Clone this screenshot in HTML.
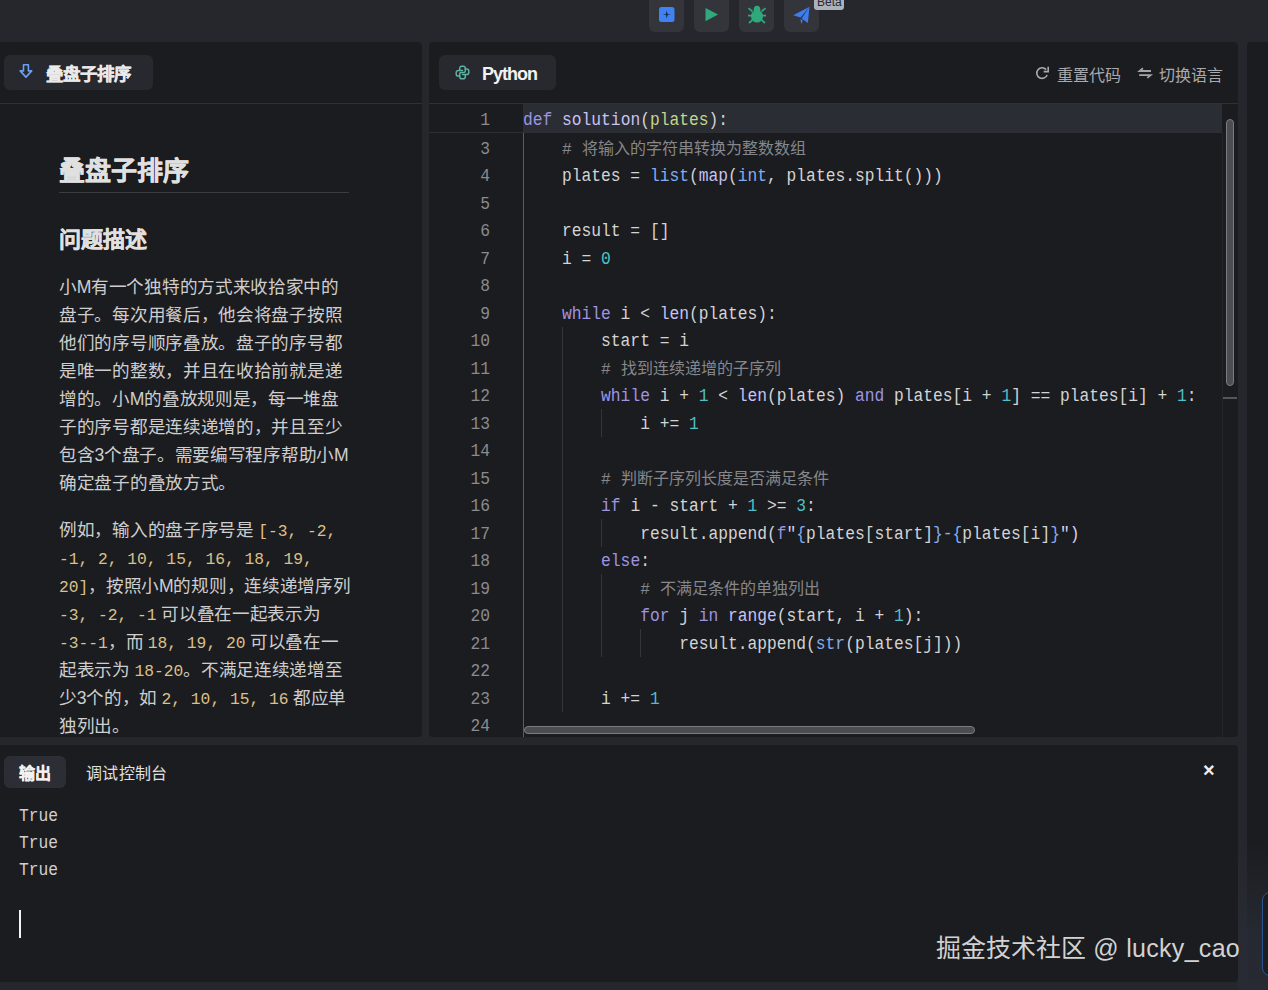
<!DOCTYPE html>
<html lang="zh-CN">
<head>
<meta charset="utf-8">
<style>
*{margin:0;padding:0;box-sizing:border-box}
html,body{width:1268px;height:990px;overflow:hidden;background:#26272c;font-family:"Liberation Sans",sans-serif;color:#d4d4d4}
.abs{position:absolute}
.panel{position:absolute;background:#1b1c20;border-radius:4px}
.btn{position:absolute;top:-6px;width:35px;height:38px;background:#34353b;border-radius:6px}
.tab{position:absolute;background:#27292f;border-radius:6px}
.sep{position:absolute;height:1px;background:#2f3137}
.mono{font-family:"Liberation Mono",monospace}
#left p{position:absolute;left:59px;width:300px;letter-spacing:-0.3px;font-size:17.6px;font-weight:300;line-height:28px;color:#cecece;white-space:nowrap}
.ic{color:#dcc088;font-family:"Liberation Mono",monospace;font-size:16.28px;letter-spacing:0}
.ln{transform:scaleY(1.13);position:absolute;left:429px;width:61px;text-align:right;font-family:"Liberation Mono",monospace;font-size:16.28px;color:#8a8b8f;height:27.5px;line-height:27.5px}
.cl{position:absolute;left:523px;font-family:"Liberation Mono",monospace;font-size:16.28px;color:#d4d4d4;height:27.5px;line-height:27.5px;white-space:pre}
.k{color:#9f94e0}
.n{color:#4fc1c9}
.b{color:#84adef}
.f{color:#c9c2f2}
.c{color:#86878b}
.cj{font-family:"Liberation Sans",sans-serif;font-size:16px;font-weight:300}
.p{color:#c5d68a}
.s{color:#d8d3e8}
.s2{color:#a9a3c9}
.sy{transform:scaleY(1.12)}
.guide{position:absolute;width:1px;background:#34353a}
</style>
</head>
<body>
<!-- toolbar -->
<div class="btn" style="left:649px"></div>
<div class="btn" style="left:694px"></div>
<div class="btn" style="left:739px"></div>
<div class="btn" style="left:784px"></div>
<svg class="abs" style="left:0;top:0" width="1268" height="40" viewBox="0 0 1268 40">
  <rect x="659" y="7" width="15.5" height="15" rx="2.5" fill="#3f82f4"/>
  <path d="M666.75 10.5 L667.6 13.9 L670.75 14.5 L667.6 15.1 L666.75 18.5 L665.9 15.1 L662.75 14.5 L665.9 13.9 Z" fill="#1d2a44"/>
  <path d="M705.5 8 L718 14.6 L705.5 21.3 Z" fill="#2fa97b"/>
  <g fill="#2fa97b" stroke="#2fa97b">
    <ellipse cx="757" cy="16.2" rx="6" ry="6.3" stroke="none"/><ellipse cx="757" cy="9.6" rx="3.3" ry="3.8" stroke="none"/>
    <path d="M748.5 8.2 L752.5 11.5 M765.5 8.2 L761.5 11.5 M748 15.6 L752 15.6 M766 15.6 L762 15.6 M749 23 L752.5 20 M765 23 L761.5 20" stroke-width="1.7" fill="none"/>
  </g>
  <path d="M809.5 6.8 L793.2 15.2 L800.6 17.6 Z M809.5 6.8 L801.6 18.4 L807.9 23.1 Z M800.3 18.9 L802.8 20.6 L801.3 23.9 Z" fill="#3e7cf0"/>
  <rect x="814" y="-5" width="30" height="15" rx="3" fill="#adb1b9"/>
  <text x="817" y="5.5" font-family="Liberation Sans" font-size="12" fill="#232833">Beta</text>
</svg>

<!-- left panel -->
<div class="panel" id="left" style="left:-6px;top:42px;width:428px;height:695px">
</div>
<div class="sep" style="left:0;top:103px;width:422px"></div>
<div class="tab" style="left:4px;top:55px;width:149px;height:35px"></div>
<div class="abs" style="left:46px;top:62px;font-size:17.5px;font-weight:bold;color:#eaeaea;-webkit-text-stroke:0.3px #eaeaea;line-height:24px">叠盘子排序</div>

<div class="abs" style="left:59px;top:153px;font-size:26px;font-weight:bold;color:#e0e0e0;-webkit-text-stroke:0.35px #e0e0e0;line-height:36px">叠盘子排序</div>
<div class="sep" style="left:59px;top:192px;width:290px;background:#3a3c42"></div>
<div class="abs" style="left:59px;top:225px;font-size:22px;font-weight:bold;color:#e0e0e0;-webkit-text-stroke:0.35px #e0e0e0;line-height:30px">问题描述</div>

<div id="left">
<p style="top:272.5px">小M有一个独特的方式来收拾家中的</p>
<p style="top:300.5px">盘子。每次用餐后，他会将盘子按照</p>
<p style="top:328.5px">他们的序号顺序叠放。盘子的序号都</p>
<p style="top:356.5px">是唯一的整数，并且在收拾前就是递</p>
<p style="top:384.5px">增的。小M的叠放规则是，每一堆盘</p>
<p style="top:412.5px">子的序号都是连续递增的，并且至少</p>
<p style="top:440.5px">包含3个盘子。需要编写程序帮助小M</p>
<p style="top:468.5px">确定盘子的叠放方式。</p>

<p style="top:515.5px">例如，输入的盘子序号是 <span class="ic">[-3, -2,</span></p>
<p style="top:543.5px"><span class="ic">-1, 2, 10, 15, 16, 18, 19,</span></p>
<p style="top:571.5px"><span class="ic">20]</span>，按照小M的规则，连续递增序列</p>
<p style="top:599.5px"><span class="ic">-3, -2, -1</span> 可以叠在一起表示为</p>
<p style="top:627.5px"><span class="ic">-3--1</span>，而 <span class="ic">18, 19, 20</span> 可以叠在一</p>
<p style="top:655.5px">起表示为 <span class="ic">18-20</span>。不满足连续递增至</p>
<p style="top:683.5px">少3个的，如 <span class="ic">2, 10, 15, 16</span> 都应单</p>
<p style="top:711.5px">独列出。</p>
</div>

<!-- right panel -->
<div class="panel" style="left:429px;top:42px;width:809px;height:695px"></div>
<div class="panel" style="left:1247px;top:42px;width:40px;height:940px"></div>
<div class="sep" style="left:429px;top:103px;width:809px"></div>
<div class="tab" style="left:439px;top:55px;width:117px;height:35px"></div>
<div class="abs" style="left:482px;top:61.5px;font-size:18px;letter-spacing:-1px;font-weight:bold;color:#f2f2f2;line-height:24px">Python</div>
<div class="abs" style="left:1057px;top:64.5px;font-size:16px;color:#a9aaae;line-height:22px">重置代码</div>
<div class="abs" style="left:1159px;top:64.5px;font-size:16px;color:#a9aaae;line-height:22px">切换语言</div>

<!-- code -->
<div class="guide" style="left:523px;top:132px;height:605px;background:#5c5d62"></div>
<div class="guide" style="left:562px;top:326.5px;height:385.0px"></div>
<div class="guide" style="left:601px;top:409.0px;height:27.5px"></div>
<div class="guide" style="left:601px;top:519.0px;height:27.5px"></div>
<div class="guide" style="left:601px;top:574.0px;height:82.5px"></div>
<div class="guide" style="left:640px;top:629.0px;height:27.5px"></div>
<div class="ln" style="top:134.75px">3</div>
<div class="cl" style="top:134.75px">    <span class="c"># <span class="cj">将输入的字符串转换为整数数组</span></span></div>
<div class="ln" style="top:162.25px">4</div>
<div class="cl sy" style="top:162.25px">    plates = <span class="b">list</span>(<span class="f">map</span>(<span class="b">int</span>, plates.split()))</div>
<div class="ln" style="top:189.75px">5</div>
<div class="ln" style="top:217.25px">6</div>
<div class="cl sy" style="top:217.25px">    result = []</div>
<div class="ln" style="top:244.75px">7</div>
<div class="cl sy" style="top:244.75px">    i = <span class="n">0</span></div>
<div class="ln" style="top:272.25px">8</div>
<div class="ln" style="top:299.75px">9</div>
<div class="cl sy" style="top:299.75px">    <span class="k">while</span> i &lt; <span class="f">len</span>(plates):</div>
<div class="ln" style="top:327.25px">10</div>
<div class="cl sy" style="top:327.25px">        start = i</div>
<div class="ln" style="top:354.75px">11</div>
<div class="cl" style="top:354.75px">        <span class="c"># <span class="cj">找到连续递增的子序列</span></span></div>
<div class="ln" style="top:382.25px">12</div>
<div class="cl sy" style="top:382.25px">        <span class="k">while</span> i + <span class="n">1</span> &lt; <span class="f">len</span>(plates) <span class="k">and</span> plates[i + <span class="n">1</span>] == plates[i] + <span class="n">1</span>:</div>
<div class="ln" style="top:409.75px">13</div>
<div class="cl sy" style="top:409.75px">            i += <span class="n">1</span></div>
<div class="ln" style="top:437.25px">14</div>
<div class="ln" style="top:464.75px">15</div>
<div class="cl" style="top:464.75px">        <span class="c"># <span class="cj">判断子序列长度是否满足条件</span></span></div>
<div class="ln" style="top:492.25px">16</div>
<div class="cl sy" style="top:492.25px">        <span class="k">if</span> i - start + <span class="n">1</span> &gt;= <span class="n">3</span>:</div>
<div class="ln" style="top:519.75px">17</div>
<div class="cl sy" style="top:519.75px">            result.append(<span class="k">f</span><span class="s">"</span><span class="b">{</span>plates[start]<span class="b">}</span><span class="s2">-</span><span class="b">{</span>plates[i]<span class="b">}</span><span class="s">")</span></div>
<div class="ln" style="top:547.25px">18</div>
<div class="cl sy" style="top:547.25px">        <span class="k">else</span>:</div>
<div class="ln" style="top:574.75px">19</div>
<div class="cl" style="top:574.75px">            <span class="c"># <span class="cj">不满足条件的单独列出</span></span></div>
<div class="ln" style="top:602.25px">20</div>
<div class="cl sy" style="top:602.25px">            <span class="k">for</span> j <span class="k">in</span> <span class="f">range</span>(start, i + <span class="n">1</span>):</div>
<div class="ln" style="top:629.75px">21</div>
<div class="cl sy" style="top:629.75px">                result.append(<span class="b">str</span>(plates[j]))</div>
<div class="ln" style="top:657.25px">22</div>
<div class="ln" style="top:684.75px">23</div>
<div class="cl sy" style="top:684.75px">        i += <span class="n">1</span></div>
<div class="ln" style="top:712.25px">24</div>
<div class="abs" style="left:429px;top:103.5px;width:793px;height:28.5px;background:#2a2d33"></div>
<div class="abs" style="left:429px;top:103.5px;width:94px;height:28.5px;background:#1b1c20"></div>
<div class="ln" style="top:106px">1</div>
<div class="cl sy" style="top:106px"><span class="k">def</span> <span class="f">solution</span>(<span class="p">plates</span>):</div>
<div class="abs" style="left:429px;top:131.5px;width:793px;height:1px;background:#2c2e33"></div>
<div class="abs" style="left:1226px;top:119px;width:8px;height:267px;border-radius:4px;background:#4c4d52;border:1px solid #7a7b80"></div>
<div class="abs" style="left:1223px;top:397px;width:14px;height:2px;background:#55565b"></div>
<div class="abs" style="left:524px;top:726px;width:451px;height:8px;border-radius:4px;background:#4c4d52;border:1px solid #7a7b80"></div>
<svg class="abs" style="left:0;top:0" width="1268" height="110" viewBox="0 0 1268 110">
  <path d="M23.5 64.7 H28.4 V70.9 H31.7 L25.95 77.1 L20.2 70.9 H23.5 Z" fill="none" stroke="#6c9ff2" stroke-width="1.6" stroke-linejoin="round"/>
  <g transform="translate(454.1,64.1) scale(0.7)" fill="none" stroke="#5cb3a4" stroke-width="2.1" stroke-linecap="round" stroke-linejoin="round">
    <path d="M12 9h-6a3 3 0 0 0 -3 3v2a3 3 0 0 0 3 3h2"/>
    <path d="M12 15h6a3 3 0 0 0 3 -3v-2a3 3 0 0 0 -3 -3h-2"/>
    <path d="M8 9v-3a3 3 0 0 1 3 -3h2a3 3 0 0 1 3 3v4a2 2 0 0 1 -2 2h-4a2 2 0 0 0 -2 2v4a3 3 0 0 0 3 3h2a3 3 0 0 0 3 -3v-3"/>
  </g>
  <g fill="none" stroke="#a9aaae" stroke-width="1.6" stroke-linecap="butt">
    <path d="M1046.1 69.6 A5.3 5.3 0 1 0 1047.1 74.9"/>
    <path d="M1048.2 66.8 V71.6 H1043.6" stroke-linejoin="miter"/>
  </g>
  <g fill="none" stroke="#a3a4a8" stroke-width="1.8" stroke-linecap="butt" stroke-linejoin="miter">
    <path d="M1151 71 H1139.6 L1142.9 68.2"/>
    <path d="M1139.2 75.1 H1150.6 L1147.3 77.9"/>
  </g>
</svg>
<div class="abs" style="left:1222px;top:132px;width:1px;height:605px;background:#24252a"></div>
<!-- bottom panel -->
<div class="panel" style="left:-6px;top:745px;width:1244px;height:237px"></div>
<div class="abs" style="left:1238px;top:840px;width:30px;height:150px;background:linear-gradient(180deg,rgba(40,43,52,0) 0%,rgba(40,43,52,0.85) 60%,rgba(40,43,52,0.9) 100%)"></div>
<div class="abs" style="left:1261.5px;top:892px;width:24px;height:84px;border:1.5px solid #2c5490;border-radius:8px;background:#1c1e24"></div>
<div class="tab" style="left:4px;top:756px;width:62px;height:32px;background:#2c2e35"></div>
<div class="abs" style="left:19px;top:763px;font-size:16px;font-weight:bold;color:#f2f2f2;-webkit-text-stroke:0.3px #f2f2f2;line-height:22px">输出</div>
<div class="abs" style="left:86px;top:763px;font-size:16px;letter-spacing:0.3px;color:#e0e0e0;line-height:22px">调试控制台</div>
<div class="abs mono" style="left:19px;top:801.5px;font-size:16.28px;line-height:27.5px;color:#d0d0d0;transform:scaleY(1.13)">True</div>
<div class="abs mono" style="left:19px;top:828.5px;font-size:16.28px;line-height:27.5px;color:#d0d0d0;transform:scaleY(1.13)">True</div>
<div class="abs mono" style="left:19px;top:856px;font-size:16.28px;line-height:27.5px;color:#d0d0d0;transform:scaleY(1.13)">True</div>
<div class="abs" style="left:19px;top:910px;width:2px;height:28px;background:#f4f4f4"></div>
<div class="abs" style="left:1203px;top:759px;font-size:20px;font-weight:bold;color:#e8eef4">×</div>
<div class="abs" style="left:936px;top:930px;font-size:25px;color:#d2d2d2;line-height:36px;white-space:nowrap">掘金技术社区<span style="letter-spacing:0.3px"> @ lucky_cao</span></div>
</body>
</html>
